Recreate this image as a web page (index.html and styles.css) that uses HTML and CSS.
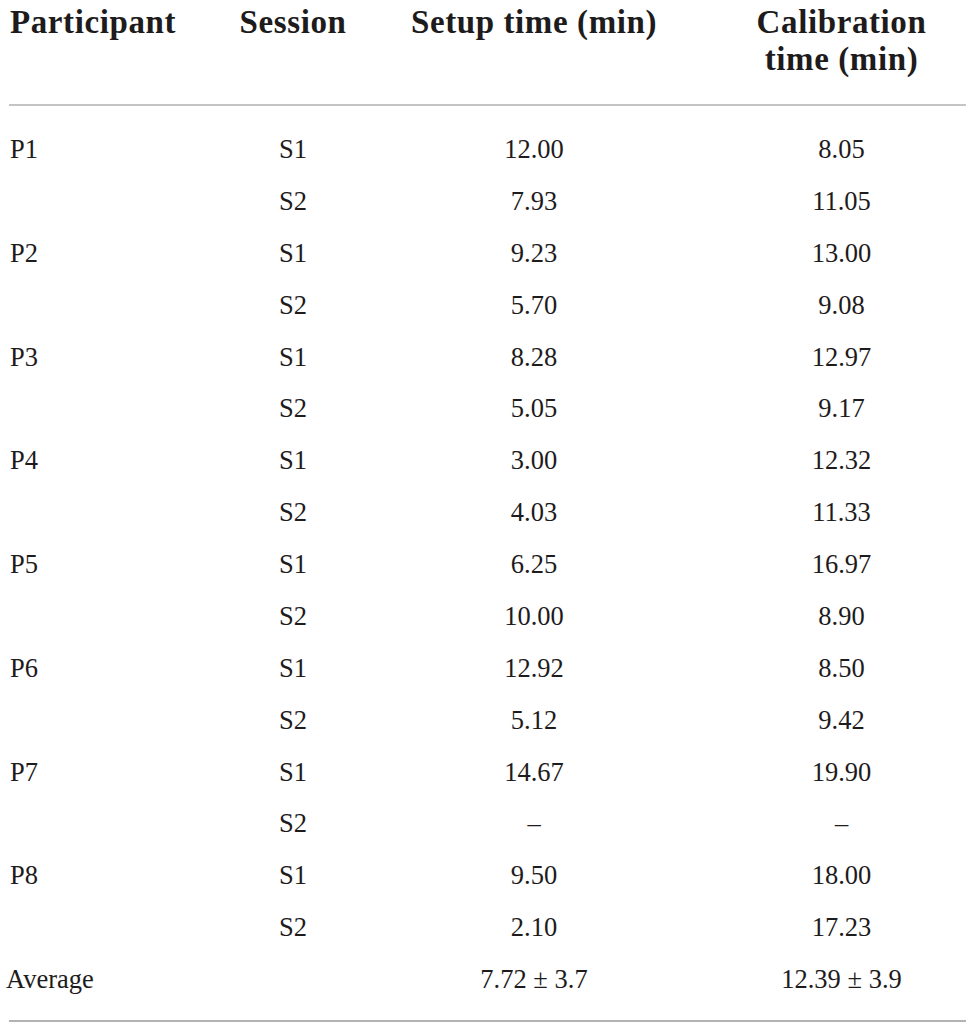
FILE: index.html
```html
<!DOCTYPE html>
<html lang="en">
<head>
    <meta charset="UTF-8">
    <title>Setup and calibration times</title>
    <link rel="stylesheet" href="styles.css">
</head>
<body>

<table class="times">
    <colgroup>
        <col class="col-part">
        <col class="col-session">
        <col class="col-setup">
        <col class="col-calib">
    </colgroup>
    <thead>
        <tr>
            <th class="left">Participant</th>
            <th>Session</th>
            <th>Setup time (min)</th>
            <th>Calibration<br>time (min)</th>
        </tr>
    </thead>
    <tbody>
        <tr class="first"><td class="left">P1</td><td>S1</td><td>12.00</td><td>8.05</td></tr>
        <tr><td class="left"></td><td>S2</td><td>7.93</td><td>11.05</td></tr>
        <tr><td class="left">P2</td><td>S1</td><td>9.23</td><td>13.00</td></tr>
        <tr><td class="left"></td><td>S2</td><td>5.70</td><td>9.08</td></tr>
        <tr><td class="left">P3</td><td>S1</td><td>8.28</td><td>12.97</td></tr>
        <tr><td class="left"></td><td>S2</td><td>5.05</td><td>9.17</td></tr>
        <tr><td class="left">P4</td><td>S1</td><td>3.00</td><td>12.32</td></tr>
        <tr><td class="left"></td><td>S2</td><td>4.03</td><td>11.33</td></tr>
        <tr><td class="left">P5</td><td>S1</td><td>6.25</td><td>16.97</td></tr>
        <tr><td class="left"></td><td>S2</td><td>10.00</td><td>8.90</td></tr>
        <tr><td class="left">P6</td><td>S1</td><td>12.92</td><td>8.50</td></tr>
        <tr><td class="left"></td><td>S2</td><td>5.12</td><td>9.42</td></tr>
        <tr><td class="left">P7</td><td>S1</td><td>14.67</td><td>19.90</td></tr>
        <tr><td class="left"></td><td>S2</td><td>&ndash;</td><td>&ndash;</td></tr>
        <tr><td class="left">P8</td><td>S1</td><td>9.50</td><td>18.00</td></tr>
        <tr><td class="left"></td><td>S2</td><td>2.10</td><td>17.23</td></tr>
        <tr class="last"><td class="left avg">Average</td><td></td><td>7.72 &plusmn; 3.7</td><td>12.39 &plusmn; 3.9</td></tr>
    </tbody>
</table>

</body>
</html>
```

FILE: styles.css
```css
body {
    font-family: "Liberation Serif", "Times New Roman", serif;
    background-color: #fff;
    color: #1e1b1c;
    margin: 0;
    padding: 0;
}
.times {
    width: 957px;
    margin: 0 0 0 9px;
    border-collapse: collapse;
    table-layout: fixed;
}
.col-part {
    width: 226px;
}
.col-session {
    width: 116px;
}
.col-setup {
    width: 366px;
}
.col-calib {
    width: 249px;
}
th {
    font-size: 33px;
    font-weight: bold;
    letter-spacing: 0.6px;
    line-height: 37px;
    text-align: center;
    vertical-align: top;
    padding: 4px 0 26px;
    border-bottom: 2px solid #c4c4c4;
    white-space: nowrap;
}
td {
    font-size: 26.5px;
    line-height: 51.875px;
    height: 51.875px;
    text-align: center;
    padding: 0;
    white-space: nowrap;
}
.left {
    text-align: left;
    padding-left: 1px;
}
.avg {
    padding-left: 0;
    position: relative;
    left: -3px;
}
tr.first td {
    padding-top: 18px;
}
tr.last td {
    padding-bottom: 14px;
    border-bottom: 2px solid #b3b3b3;
}
```
